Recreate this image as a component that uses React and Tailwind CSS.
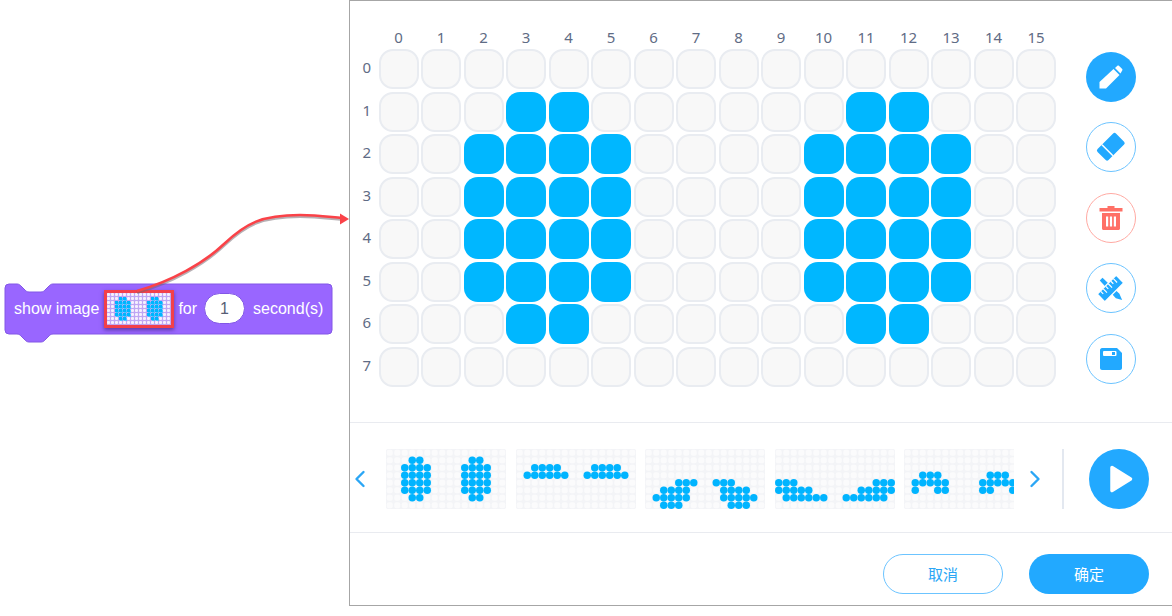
const COLS = Array.from({ length: 16 }, (_, i) => i);
const ROWS = Array.from({ length: 8 }, (_, i) => i);

// each frame: row -> columns that are lit
const range = (a, b) => Array.from({ length: b - a + 1 }, (_, i) => a + i);
const FACE = {
  1: [3, 4, 11, 12],
  2: [...range(2, 5), ...range(10, 13)],
  3: [...range(2, 5), ...range(10, 13)],
  4: [...range(2, 5), ...range(10, 13)],
  5: [...range(2, 5), ...range(10, 13)],
  6: [3, 4, 11, 12],
};
const FRAMES = [
  FACE,
  {
    2: [...range(2, 5), ...range(10, 13)],
    3: [...range(1, 6), ...range(9, 14)],
  },
  {
    4: [...range(4, 6), ...range(9, 11)],
    5: [...range(2, 5), ...range(10, 13)],
    6: [...range(1, 5), ...range(10, 14)],
    7: [...range(2, 4), ...range(11, 13)],
  },
  {
    4: [...range(0, 2), ...range(13, 15)],
    5: [...range(0, 4), ...range(11, 15)],
    6: [...range(1, 6), ...range(9, 14)],
  },
  {
    3: [...range(2, 4), ...range(11, 13)],
    4: [...range(1, 5), ...range(10, 14)],
    5: [1, 4, 5, 10, 11, 14],
  },
];

const isOn = (frame, r, c) => (frame[r] || []).includes(c);

// preview of a frame, drawn so the dots keep the 7.5px pitch
function Thumb({ frame }) {
  return (
    <svg className="shrink-0 rounded-[2px] bg-[#f3f4f7]" width="120" height="60" viewBox="0 0 120 60">
      {ROWS.map((r) =>
        COLS.map((c) =>
          isOn(frame, r, c) ? (
            <circle key={`${r}-${c}`} cx={c * 7.5 + 3.75} cy={r * 7.5 + 3.75} r="3.75" fill="#00b4ff" />
          ) : (
            <rect key={`${r}-${c}`} x={c * 7.5 + 0.75} y={r * 7.5 + 0.75} width="6" height="6" rx="2" fill="#fbfbfc" />
          )
        )
      )}
    </svg>
  );
}

function MiniImage() {
  return (
    <div className="grid grid-cols-[repeat(16,4px)] grid-rows-[repeat(8,4px)] border-[3px] border-[#f2404a] bg-[#bfa6f3] shadow-[0_2px_4px_rgba(40,20,90,0.55)]">
      {ROWS.map((r) =>
        COLS.map((c) => (
          <div
            key={`${r}-${c}`}
            className={
              isOn(FACE, r, c)
                ? 'mr-[1px] mb-[1px] bg-[#00b4ff] shadow-[1px_1px_0_#4cc3ff]'
                : 'rounded-[1px] mr-[1px] mb-[1px] bg-[#f4effe]'
            }
          />
        ))
      )}
    </div>
  );
}

function Block() {
  return (
    <div className="relative flex items-center w-[327px] h-[50px] pl-[9px] text-white text-[16px]">
      <svg className="absolute left-0 top-0 overflow-visible" width="327" height="58" viewBox="0 0 327 58">
        <path
          d="M0 4A4 4 0 0 1 4 0H12c2 0 3 1 4 2l4 4c1 1 2 2 4 2h12c2 0 3-1 4-2l4-4c1-1 2-2 4-2H323a4 4 0 0 1 4 4V46a4 4 0 0 1-4 4H48c-2 0-3 1-4 2l-4 4c-1 1-2 2-4 2H24c-2 0-3-1-4-2l-4-4c-1-1-2-2-4-2H4a4 4 0 0 1-4-4Z"
          fill="#9966ff"
          stroke="#8257e6"
          strokeWidth="1"
        />
      </svg>
      <span className="relative whitespace-nowrap">show image</span>
      <div className="relative ml-[5px]">
        <MiniImage />
      </div>
      <span className="relative ml-[4px]">for</span>
      <div className="relative ml-[7px] flex w-[41px] h-[31px] items-center justify-center rounded-full border border-[#8257e6] bg-white text-[#575e75]">
        1
      </div>
      <span className="relative ml-[8px] whitespace-nowrap">second(s)</span>
    </div>
  );
}

function Arrow() {
  return (
    <svg className="absolute left-0 top-0 pointer-events-none" width="352" height="300" viewBox="0 0 352 300">
      <path
        d="M137 291C172 281 204 263 224 244C246 223 262 215 300 215C318 215 330 217 342 218"
        fill="none"
        stroke="#70626a"
        strokeOpacity="0.5"
        strokeWidth="3"
        transform="translate(0 1.5)"
      />
      <path
        d="M137 291C172 281 204 263 224 244C246 223 262 215 300 215C318 215 330 217 342 218"
        fill="none"
        stroke="#fa4248"
        strokeWidth="2.6"
      />
      <path d="M340 213.5L349 219L340 224.5Z" fill="#fa4248" />
    </svg>
  );
}

const PencilIcon = () => (
  <svg width="24" height="24" viewBox="0 0 24 24" fill="#fff">
    <path d="M.5 23.5V17L14.5 4L20.5 10L7 23.5Z" />
    <path d="M16 3L18.4 .8C18.9 .4 19.4 .4 19.9 .8L23.2 4C23.6 4.5 23.6 5 23.2 5.5L21.5 8.5Z" />
  </svg>
);

const EraserIcon = () => (
  <svg width="30" height="30" viewBox="0 0 30 30">
    <g transform="rotate(-45 15 15)">
      <rect x="2" y="7" width="26" height="15.5" rx="2" fill="#22a9ff" />
      <rect x="9.5" y="7" width="1.5" height="15.5" fill="#fff" />
    </g>
  </svg>
);

const TrashIcon = () => (
  <svg width="24" height="24" viewBox="0 0 24 24" fill="#ff7066">
    <path d="M8.5 0H15.5V2H23.5V5.5H.5V2H8.5Z" />
    <path fillRule="evenodd" d="M3 7H21V22.5C21 23.3 20.3 24 19.5 24H4.5C3.7 24 3 23.3 3 22.5ZM7 10.5V20.5H9.2V10.5ZM10.9 10.5V20.5H13.1V10.5ZM14.8 10.5V20.5H17V10.5Z" />
  </svg>
);

const RulerIcon = () => (
  <svg width="25" height="25" viewBox="0 0 28 28">
    <path d="M2 5L5 2L24 20L27 27L20 25Z" fill="#22a9ff" />
    <g transform="rotate(-45 14 14)">
      <rect x="-1" y="8" width="30" height="12" rx="1" fill="#22a9ff" stroke="#fff" strokeWidth="1.5" />
      <path d="M4 8.5V12.5M8 8.5V14.5M12 8.5V12.5M16 8.5V14.5M20 8.5V12.5M24 8.5V14.5" stroke="#fff" strokeWidth="1.3" />
    </g>
  </svg>
);

const SaveIcon = () => (
  <svg width="22" height="22" viewBox="0 0 22 22">
    <path d="M2 0H17L22 5V20C22 21 21 22 20 22H2C1 22 0 21 0 20V2C0 1 1 0 2 0Z" fill="#22a9ff" />
    <rect x="3" y="3" width="13.5" height="5" rx="1" fill="#fff" />
    <rect x="12" y="4" width="3" height="3" fill="#22a9ff" />
  </svg>
);

function ToolButton({ filled, danger, children }) {
  let tone = 'border border-[#6cc4ff] bg-white';
  if (filled) tone = 'bg-[#22a9ff]';
  if (danger) tone = 'border border-[#ffaaa3] bg-white';
  return (
    <button className={`flex w-[50px] h-[50px] items-center justify-center rounded-full ${tone}`}>
      {children}
    </button>
  );
}

function Chevron({ flip }) {
  return (
    <svg width="12" height="18" viewBox="0 0 12 18" fill="none" stroke="#2ba6f5" strokeWidth="2.4" strokeLinecap="round" strokeLinejoin="round">
      <path d={flip ? 'M2.5 2L9.5 9L2.5 16' : 'M9.5 2L2.5 9L9.5 16'} />
    </svg>
  );
}

export default function App() {
  return (
    <div className="relative flex w-[1172px] h-[616px] bg-white overflow-hidden font-['Noto_Sans','Noto_Sans_CJK_SC',sans-serif]">
      {/* Block */}
      <div className="w-[349px] shrink-0 pt-[283.5px] pl-[5px] font-['Liberation_Sans',sans-serif]">
        <Block />
      </div>
      <Arrow />

      {/* Editor panel */}
      <div className="flex flex-1 flex-col h-[606px] border border-r-0 border-[#a6a6a6]">
        <div className="flex h-[422px] shrink-0 border-b border-[#e9ebf0] pt-[25.5px] pl-[7.5px]">
          <div className="grid grid-cols-[18.5px_repeat(16,40px)] grid-rows-[20px_repeat(8,40px)] gap-[2.5px] text-[15px] text-[#5f6c85]">
            <div />
            {COLS.map((c) => (
              <div key={c} className="flex items-center justify-center pt-[1px]">
                {c}
              </div>
            ))}
            {ROWS.map((r) => [
              <div key={`l${r}`} className="flex items-center justify-center pb-[3px]">
                {r}
              </div>,
              ...COLS.map((c) => (
                <div
                  key={`${r}-${c}`}
                  className={
                    isOn(FACE, r, c)
                      ? 'rounded-[14px] bg-[#00b7ff]'
                      : 'rounded-[14px] border-2 border-[#e9ecf1] bg-[#f8f8f8]'
                  }
                />
              )),
            ])}
          </div>
          <div className="ml-[29.5px] flex flex-col gap-[20.5px] pt-[25px]">
            <ToolButton filled>
              <PencilIcon />
            </ToolButton>
            <ToolButton>
              <EraserIcon />
            </ToolButton>
            <ToolButton danger>
              <TrashIcon />
            </ToolButton>
            <ToolButton>
              <RulerIcon />
            </ToolButton>
            <ToolButton>
              <SaveIcon />
            </ToolButton>
          </div>
        </div>

        <div className="flex h-[110px] shrink-0 items-center border-b border-[#e9ebf0] pl-[4px] pt-[3px]">
          <Chevron />
          <div className="ml-[20px] flex w-[628px] gap-[9.5px] overflow-hidden">
            {FRAMES.map((frame, i) => (
              <Thumb key={i} frame={frame} />
            ))}
          </div>
          <div className="ml-[15px]">
            <Chevron flip />
          </div>
          <div className="ml-[21px] w-[2px] h-[60px] bg-[#e3e8f0]" />
          <button className="ml-[25px] flex w-[60px] h-[60px] items-center justify-center rounded-full bg-[#22a9ff]">
            <svg width="24" height="28" viewBox="0 0 24 28" className="ml-[3px]">
              <path d="M3 2.5L21.5 14L3 25.5Z" fill="#fff" stroke="#fff" strokeWidth="3.5" strokeLinejoin="round" />
            </svg>
          </button>
        </div>

        <div className="flex flex-1 justify-end gap-[26px] pt-[21px] pr-[23px] text-[15px]">
          <button className="w-[120px] h-[40px] rounded-full border border-[#6cc4ff] bg-white text-[#2ba6f5]">取消</button>
          <button className="w-[120px] h-[40px] rounded-full bg-[#22a9ff] text-white">确定</button>
        </div>
      </div>
    </div>
  );
}
